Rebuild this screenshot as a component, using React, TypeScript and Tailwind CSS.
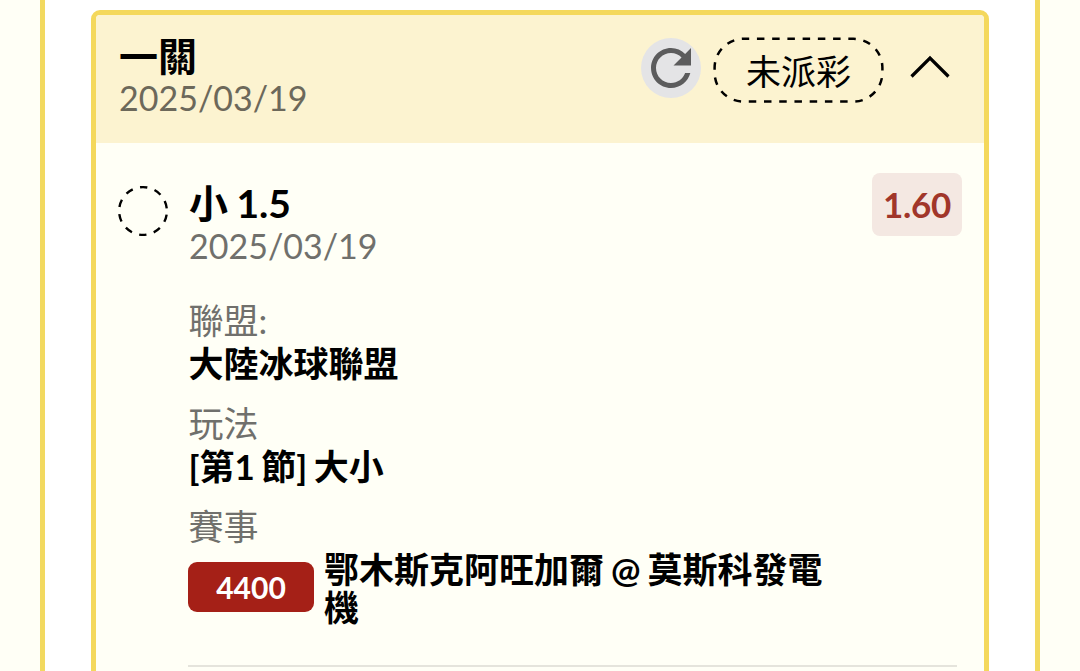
const DETAILS = [
  { label: '聯盟:', value: '大陸冰球聯盟' },
  { label: '玩法', value: '[第1 節] 大小' }
];

export default function App() {
  return (
    <div className="h-[671px] w-[1080px] overflow-hidden bg-[#fffff6] px-10 font-[Lato,'Noto_Sans_CJK_TC',sans-serif] text-black">
      <main className="h-full border-x-5 border-[#f2d95f] bg-white px-[46px] pt-2.5">
        <section className="h-[680px] overflow-hidden rounded-t-[9px] border-5 border-[#f4d85c] bg-[#fffff6]">
          <BetHeader />
          <BetBody />
        </section>
      </main>
    </div>
  );
}

function BetHeader() {
  return (
    <header className="flex h-32 items-start justify-between bg-[#fcf3d0] pl-[23px] pr-[34px] pt-5">
      <div>
        <h1 className="h-[42px] text-[39px] font-bold leading-[42px]">一關</h1>
        <p className="h-[42px] text-[34px] leading-[42px] text-[#6c685a]">2025/03/19</p>
      </div>
      <div className="flex items-start">
        <button aria-label="Refresh" className="mt-[2.5px] size-[60px] rounded-full bg-[#e4e4e6] text-[#5c5c5d]">
          <RefreshIcon />
        </button>
        <div className="ml-[12.5px] mt-0.5 grid h-[66px] w-[171px] place-items-center">
          <PillOutline />
          <span className="col-start-1 row-start-1 pt-0.5 text-[35px] leading-[42px]">未派彩</span>
        </div>
        <button aria-label="Collapse" className="ml-[26px] mt-5">
          <ChevronUpIcon />
        </button>
      </div>
    </header>
  );
}

function BetBody() {
  return (
    <div className="flex pl-[21px] pr-[22px] pt-[30px]">
      <StatusCircle />
      <div className="ml-[19px] flex-1">
        <div className="flex items-start justify-between">
          <div className="pl-px pt-[9px]">
            <h2 className="h-[43px] text-[39px] font-bold leading-[43px] [word-spacing:-1px]">小 1.5</h2>
            <p className="h-[42px] text-[34px] leading-[42px] text-[#70706c]">2025/03/19</p>
          </div>
          <span className="flex h-[63px] w-[90px] items-center justify-center rounded-lg bg-[#f4e8e2] text-[35px] font-bold tracking-[-0.3px] text-[#a1362a]">
            1.60
          </span>
        </div>

        <dl className="mt-[32px] text-[35px] leading-[43px] [word-spacing:-2px]">
          {DETAILS.map(d => (
            <div key={d.label} className="mb-[17px] h-[86px] pl-[0.5px]">
              <dt className="text-[#70706c]">{d.label}</dt>
              <dd className="font-bold">{d.value}</dd>
            </div>
          ))}
          <div>
            <dt className="pl-[0.5px] text-[#70706c]">賽事</dt>
            <dd className="mt-[3px] flex items-start gap-2.5 font-bold leading-[37.5px]">
              <span className="mt-[11px] flex h-[50px] w-[126px] shrink-0 items-center justify-center rounded-[9px] bg-[#a52017] pt-0.5 text-[30px] text-white">
                4400
              </span>
              <span className="w-[510px] [word-spacing:-1.5px]">鄂木斯克阿旺加爾 @ 莫斯科發電機</span>
            </dd>
          </div>
        </dl>
        <hr className="mr-[5px] mt-[39px] border-t-2 border-[#e5e4dc]" />
      </div>
    </div>
  );
}

function RefreshIcon() {
  return (
    <svg width="60" height="60" viewBox="0 0 24 24" fill="currentColor">
      <path d="M17.65 6.35C16.2 4.9 14.21 4 12 4c-4.42 0-7.99 3.58-7.99 8s3.57 8 7.99 8c3.73 0 6.84-2.55 7.73-6h-2.08c-.82 2.33-3.04 4-5.65 4-3.31 0-6-2.69-6-6s2.69-6 6-6c1.66 0 3.14.69 4.22 1.78L13 11h7V4l-2.35 2.35z" />
    </svg>
  );
}

function PillOutline() {
  return (
    <svg className="col-start-1 row-start-1" width="171" height="66" viewBox="0 0 171 66" fill="none" stroke="currentColor" strokeWidth="2.5">
      <rect x="1.6" y="1.8" width="167.8" height="62.8" rx="29" strokeDasharray="7.5 7.73" strokeDashoffset="1.9" />
    </svg>
  );
}

function ChevronUpIcon() {
  return (
    <svg width="40" height="24" viewBox="0 0 40 24" fill="none" stroke="currentColor" strokeWidth="3.2">
      <path d="M1.5 21.5 20 3l18.5 18.5" />
    </svg>
  );
}

function StatusCircle() {
  return (
    <svg className="mt-[12px] shrink-0" width="52" height="52" viewBox="0 0 52 52" fill="none" stroke="currentColor" strokeWidth="2.4">
      <circle cx="26" cy="26" r="23.9" strokeDasharray="7.5 7.52" strokeDashoffset="-3.7" />
    </svg>
  );
}
